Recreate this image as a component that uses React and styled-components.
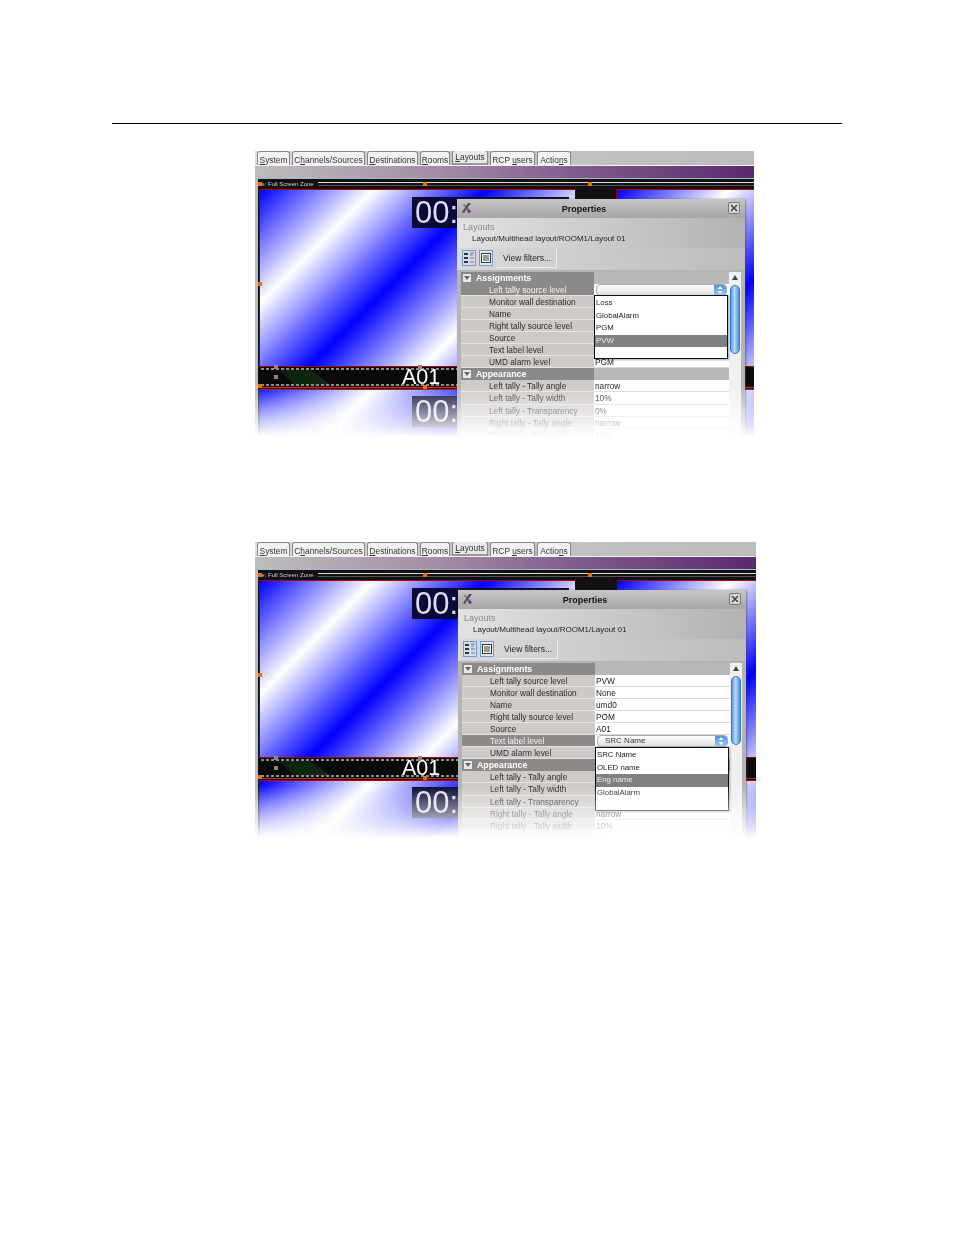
import React from "react"
import styled, { createGlobalStyle } from "styled-components"

const GlobalStyle = createGlobalStyle`
  html, body {
    margin: 0;
    padding: 0;
    background: #fff;
    font-family: "Liberation Sans", Arial, sans-serif;
  }
`

const Page = styled.div`
  width: 954px;
  height: 1235px;
  overflow: hidden;
  display: flex;
  flex-direction: column;
  align-items: flex-start;
`

const HeaderRule = styled.div`
  margin: 123px 0 0 112px;
  width: 730px;
  height: 1px;
  background: #000;
`

const Figure = styled.div`
  position: relative;
  display: flex;
  flex-direction: column;
  width: ${({ $width }) => $width}px;
  height: ${({ $height }) => $height}px;
  margin: ${({ $top }) => $top}px 0 0 255px;
  overflow: hidden;
  filter: blur(0.35px);
`

const Fade = styled.div`
  position: absolute;
  left: 0;
  right: 0;
  bottom: 0;
  height: 52px;
  background: linear-gradient(rgba(255, 255, 255, 0), #fff);
`

const TabBar = styled.div`
  display: flex;
  align-items: flex-end;
  gap: 2px;
  height: 14px;
  padding-left: 2px;
  background: linear-gradient(90deg, #dcdcdc, #c4c4c4 40%, #bcbcbc);
  flex: none;
`

const Tab = styled.div`
  height: ${({ $active }) => ($active ? 15 : 14)}px;
  width: ${({ $width }) => $width}px;
  box-sizing: border-box;
  border: 1px solid #888;
  border-bottom: ${({ $active }) => ($active ? "2px solid #999" : "none")};
  border-radius: 3px 3px 0 0;
  background: ${({ $active }) => ($active ? "#e8e8e8" : "#f2f2f2")};
  color: #333;
  font-size: 8.4px;
  line-height: ${({ $active }) => ($active ? 13 : 17)}px;
  text-align: center;
  white-space: nowrap;
`

const Band = styled.div`
  flex: none;
  height: 12px;
  border-top: 1px solid #f2f2f2;
  border-bottom: 1px solid #a9bac6;
  background: linear-gradient(90deg, #bdbdbd, #a58fa8 35%, #7f5a8c 65%, #5a2a6e);
`

const Canvas = styled.div`
  position: relative;
  flex: 1;
  display: flex;
  flex-direction: column;
  background: #111;
  border-left: 3px solid #b8bcc0;
  overflow: hidden;
`

const TopStrip = styled.div`
  flex: none;
  height: 10px;
  display: flex;
  align-items: center;
  gap: 4px;
  color: #ccc;
  font-size: 6px;
  white-space: nowrap;
`

const StripLine = styled.span`
  flex: 1;
  height: 2px;
  border-top: 1px solid #ddd;
  border-bottom: 1px solid #555;
`

const ZoneGrid = styled.div`
  display: grid;
  grid-template-columns: 316px ${({ $gap }) => $gap}px 1fr;
  grid-template-rows: 177px 22px 70px;
  padding-left: 1px;
`

const Zone = styled.div`
  position: relative;
  grid-column: ${({ $col }) => $col};
  box-sizing: border-box;
  border-top: 1px solid #b00000;
  border-left: 1px solid #900000;
  margin-top: ${({ $lower }) => ($lower ? 1 : 0)}px;
  background: repeating-linear-gradient(135deg, #0000ff 0, #ffffff 80px, #0000ff 160px);
`

const TallyBar = styled.div`
  position: relative;
  grid-column: ${({ $col }) => $col};
  box-sizing: border-box;
  background: #0a0a0a;
  border-top: 1px solid #a00000;
  border-bottom: 1px solid #d02020;
  color: #fff;
`

const DashLine = styled.div`
  position: absolute;
  left: 2px;
  right: 0;
  top: ${({ $y }) => $y}px;
  height: 2px;
  background: repeating-linear-gradient(90deg, #8c8c8c 0, #8c8c8c 3px, transparent 3px, transparent 5px);
`

const Wedge = styled.div`
  position: absolute;
  left: 20px;
  top: 3px;
  width: 52px;
  height: 15px;
  background: linear-gradient(90deg, #0a240c, #0e260e 60%, #202020);
  clip-path: polygon(0 0, 60% 0, 100% 100%, 30% 100%);
`

const BarLabel = styled.div`
  position: absolute;
  left: 143px;
  top: 0;
  font-size: 21.5px;
  line-height: 21px;
`

const Clock = styled.div`
  position: absolute;
  left: 152px;
  top: ${({ $y }) => $y}px;
  width: 157px;
  height: 31px;
  padding-left: 3px;
  box-sizing: border-box;
  background: #0a0a38;
  color: #dcdcf4;
  font-size: 31px;
  line-height: 31px;
  white-space: nowrap;
  overflow: hidden;
`

const Handle = styled.div`
  position: absolute;
  left: ${({ $x }) => $x}px;
  top: ${({ $y }) => $y}px;
  width: 4px;
  height: 4px;
  background: ${({ $gray }) => ($gray ? "#888" : "#f07000")};
`

const Dialog = styled.div`
  position: absolute;
  left: ${({ $left }) => $left}px;
  top: 20px;
  width: 288px;
  box-sizing: border-box;
  padding: 0 4px;
  background: #b4b4b4;
  box-shadow: 1px 0 2px rgba(60, 60, 60, 0.5);
  border-radius: 2px 2px 0 0;
`

const TitleBar = styled.div`
  position: relative;
  height: 19px;
  margin: 0 -4px;
  padding-right: 34px;
  display: flex;
  align-items: center;
  justify-content: center;
  background: linear-gradient(#c6c6c6, #a6a6a6);
  color: #111;
  font-size: 9px;
  font-weight: 700;
`

const TitleLogo = styled.svg`
  position: absolute;
  left: 4px;
  top: 3px;
`

const CloseBox = styled.div`
  position: absolute;
  right: 5px;
  top: 3px;
  width: 12px;
  height: 12px;
  box-sizing: border-box;
  border: 1px solid #777;
  border-radius: 2px;
  background: #d8d8d8;
  display: flex;
  align-items: center;
  justify-content: center;
`

const PathArea = styled.div`
  height: 30px;
  margin: 0 -4px;
  padding: 4px 0 0 6px;
  box-sizing: border-box;
  background: linear-gradient(90deg, #e2e2e2, #c6c6c6 60%, #b2b2b2);
`

const PathCaption = styled.div`
  color: #888;
  font-size: 9px;
  line-height: 11px;
`

const PathValue = styled.div`
  margin-left: 9px;
  color: #222;
  font-size: 8px;
  line-height: 12px;
`

const Toolbar = styled.div`
  height: 22px;
  margin: 0 -4px;
  padding: 0 0 2px 5px;
  box-sizing: border-box;
  display: flex;
  align-items: center;
  gap: 3px;
  background: linear-gradient(90deg, #dadada, #bcbcbc);
`

const ToolIcon = styled.div`
  width: 14px;
  height: 16px;
  box-sizing: border-box;
  border: 1px solid #6f9bd0;
  background: ${({ $on }) => ($on ? "#d4deea" : "#e4e8ee")};
  display: flex;
  align-items: center;
  justify-content: center;
`

const ToolButton = styled.div`
  margin-left: 1px;
  width: 60px;
  height: 19px;
  box-sizing: border-box;
  padding-left: 6px;
  color: #222;
  font-size: 8.5px;
  line-height: 18px;
  border-right: 1px solid #eee;
  border-bottom: 1px solid #eee;
`

const GridBody = styled.div`
  position: relative;
  display: flex;
  margin-top: 2px;
`

const Rows = styled.div`
  width: 268px;
  flex: none;
`

const Row = styled.div`
  display: grid;
  grid-template-columns: 133px 1fr;
  height: 12.05px;
  font-size: 8.3px;
  line-height: 12px;
  white-space: nowrap;
`

const Label = styled.div`
  padding-left: ${({ $section }) => ($section ? 15 : 28)}px;
  position: relative;
  box-sizing: border-box;
  background: ${({ $section, $selected }) =>
    $section || $selected ? "#8a8a8a" : "#cecac8"};
  color: ${({ $section, $selected }) =>
    $section ? "#fff" : $selected ? "#f4f4f4" : "#2c2c2c"};
  font-weight: ${({ $section }) => ($section ? 700 : 400)};
  font-size: ${({ $section }) => ($section ? 8.8 : 8.3)}px;
  box-shadow: inset 0 -1px 0 ${({ $section }) => ($section ? "#8a8a8a" : "#e6e4e2")};
`

const SectionBox = styled.span`
  position: absolute;
  left: 2px;
  top: 2px;
  width: 8px;
  height: 8px;
  background: #e8e8e8;
  &::after {
    content: "";
    position: absolute;
    left: 1px;
    top: 2px;
    border: 3px solid transparent;
    border-top: 4px solid #666;
  }
`

const Value = styled.div`
  padding-left: 1px;
  background: ${({ $section }) => ($section ? "#b8b8b8" : "#fff")};
  color: #222;
  box-shadow: inset 0 -1px 0 ${({ $section }) => ($section ? "#b8b8b8" : "#d8d8d8")};
`

const Combo = styled.div`
  position: relative;
  height: 10px;
  margin: 0 2px 0 1px;
  padding-left: 7px;
  font-size: 8px;
  line-height: 10px;
  color: #333;
  border: 1px solid #aaa;
  border-radius: 4px;
  background: linear-gradient(#fff, #e0e0e0);
  &::after {
    content: "";
    position: absolute;
    right: 0;
    top: 0;
    width: 12px;
    height: 10px;
    border-radius: 0 3px 3px 0;
    background: linear-gradient(#4a90e8, #9cc6f4);
  }
`

const ComboArrows = styled.svg`
  position: absolute;
  right: 3px;
  top: 1px;
  z-index: 1;
`

const DropList = styled.div`
  position: absolute;
  left: 133px;
  top: ${({ $y }) => $y}px;
  width: 134px;
  height: 64px;
  padding-top: 1px;
  box-sizing: border-box;
  background: #fff;
  border: 1px solid #111;
  box-shadow: 1px 1px 2px rgba(0, 0, 0, 0.35);
  font-size: 7.8px;
`

const DropItem = styled.div`
  height: 12.6px;
  line-height: 12.6px;
  padding-left: 1px;
  color: ${({ $selected }) => ($selected ? "#ececec" : "#222")};
  background: ${({ $selected }) => ($selected ? "#808080" : "transparent")};
`

const ScrollTrack = styled.div`
  position: relative;
  width: 12px;
  flex: none;
  background: #f0f0f0;
`

const ScrollArrow = styled.div`
  position: absolute;
  left: 3px;
  top: 3px;
  border: 3px solid transparent;
  border-bottom: 5px solid #444;
  border-top: none;
`

const ScrollThumb = styled.div`
  position: absolute;
  left: 1px;
  top: 13px;
  width: 10px;
  height: 69px;
  box-sizing: border-box;
  border: 1px solid #3a78c8;
  border-radius: 5px;
  background: linear-gradient(90deg, #5a9ce8, #b8d8f8 45%, #4a8cdc);
`

const assignmentRows = [
  "Left tally source level",
  "Monitor wall destination",
  "Name",
  "Right tally source level",
  "Source",
  "Text label level",
  "UMD alarm level",
]

const appearanceRows = [
  "Left tally - Tally angle",
  "Left tally - Tally width",
  "Left tally - Transparency",
  "Right tally - Tally angle",
  "Right tally - Tally width",
  "Right tally - Transparency",
]

const TAB_LIST = [
  { label: <><u>S</u>ystem</>, width: 33 },
  { label: <>C<u>h</u>annels/Sources</>, width: 73 },
  { label: <><u>D</u>estinations</>, width: 51 },
  { label: <><u>R</u>ooms</>, width: 30 },
  { label: <><u>L</u>ayouts</>, width: 36, active: true },
  { label: <>RCP <u>u</u>sers</>, width: 45 },
  { label: <>Actio<u>n</u>s</>, width: 34 },
]

const Logo = () => (
  <TitleLogo width="12" height="12" viewBox="0 0 12 12">
    <path d="M1 2 L4 2 L11 10 L8 10 Z" fill="#8a8a8a" />
    <path d="M10 1 L7 1 L1 10 L3 11 Z" fill="#555" />
    <path d="M6 6 L10 10 L7 11 Z" fill="#7a1a8a" />
  </TitleLogo>
)

const CloseIcon = () => (
  <svg width="8" height="8" viewBox="0 0 8 8">
    <path d="M1 1 L7 7 M7 1 L1 7" stroke="#444" strokeWidth="1.6" />
  </svg>
)

const TreeIcon = () => (
  <svg width="10" height="12" viewBox="0 0 10 12">
    <path d="M0 1h4v2H0zM0 5h4v2H0zM0 9h4v2H0z" fill="#333" />
    <path d="M6 1h4M6 3h3M6 6h4M6 10h4" stroke="#777" strokeWidth="1" />
  </svg>
)

const ListIcon = () => (
  <svg width="10" height="10" viewBox="0 0 10 10">
    <rect x="0.5" y="0.5" width="9" height="9" fill="#fff" stroke="#333" />
    <path d="M2 3h6M2 5h6M2 7h6" stroke="#333" strokeWidth="1" />
  </svg>
)

const Arrows = () => (
  <ComboArrows width="6" height="8" viewBox="0 0 6 8">
    <path d="M3 0 L5.5 3 L0.5 3 Z M3 8 L0.5 5 L5.5 5 Z" fill="#fff" />
  </ComboArrows>
)

const handles = [
  { x: 0, y: 3 },
  { x: 165, y: 3 },
  { x: 330, y: 3 },
  { x: 0, y: 103 },
  { x: 0, y: 205 },
  { x: 165, y: 206 },
  { x: 16, y: 186, gray: true },
  { x: 16, y: 196, gray: true },
  { x: 160, y: 186, gray: true },
]

const Screenshot = ({ width, height, top, gap, dialogLeft, values, comboRow, comboText, items, dropY, selected }) => {
  const rowValue = (name, index) => {
    if (index === comboRow) {
      return (
        <Combo>
          {comboText}
          <Arrows />
        </Combo>
      )
    }
    return values[name] || ""
  }

  return (
    <Figure $width={width} $height={height} $top={top}>
      <TabBar>
        {TAB_LIST.map((tab, i) => (
          <Tab key={i} $width={tab.width} $active={tab.active}>
            {tab.label}
          </Tab>
        ))}
      </TabBar>
      <Band />
      <Canvas>
        <TopStrip>
          ne: Full Screen Zone
          <StripLine />
        </TopStrip>
        <ZoneGrid $gap={gap}>
          <Zone $col={1}>
            <Clock $y={7}>00:00:00</Clock>
          </Zone>
          <Zone $col={3} />
          <TallyBar $col={1}>
            <Wedge />
            <DashLine $y={1} />
            <DashLine $y={17} />
            <BarLabel>A01</BarLabel>
          </TallyBar>
          <TallyBar $col={3} />
          <Zone $col={1} $lower>
            <Clock $y={6}>00:00:00</Clock>
          </Zone>
          <Zone $col={3} $lower />
        </ZoneGrid>
        {handles.map((h, i) => (
          <Handle key={i} $x={h.x} $y={h.y} $gray={h.gray} />
        ))}

        <Dialog $left={dialogLeft}>
          <TitleBar>
            <Logo />
            Properties
            <CloseBox>
              <CloseIcon />
            </CloseBox>
          </TitleBar>
          <PathArea>
            <PathCaption>Layouts</PathCaption>
            <PathValue>Layout/Multihead layout/ROOM1/Layout 01</PathValue>
          </PathArea>
          <Toolbar>
            <ToolIcon $on>
              <TreeIcon />
            </ToolIcon>
            <ToolIcon>
              <ListIcon />
            </ToolIcon>
            <ToolButton>View filters...</ToolButton>
          </Toolbar>
          <GridBody>
            <Rows>
              <Row>
                <Label $section>
                  <SectionBox />
                  Assignments
                </Label>
                <Value $section />
              </Row>
              {assignmentRows.map((name, i) => (
                <Row key={name}>
                  <Label $selected={i === comboRow}>{name}</Label>
                  <Value>{rowValue(name, i)}</Value>
                </Row>
              ))}
              <Row>
                <Label $section>
                  <SectionBox />
                  Appearance
                </Label>
                <Value $section />
              </Row>
              {appearanceRows.map((name) => (
                <Row key={name}>
                  <Label>{name}</Label>
                  <Value>{values[name]}</Value>
                </Row>
              ))}
            </Rows>
            <ScrollTrack>
              <ScrollArrow />
              <ScrollThumb />
            </ScrollTrack>
            <DropList $y={dropY}>
              {items.map((item, i) => (
                <DropItem key={i} $selected={item === selected}>
                  {item}
                </DropItem>
              ))}
            </DropList>
          </GridBody>
        </Dialog>
      </Canvas>
      <Fade />
    </Figure>
  )
}

const appearanceValues = {
  "Left tally - Tally angle": "narrow",
  "Left tally - Tally width": "10%",
  "Left tally - Transparency": "0%",
  "Right tally - Tally angle": "narrow",
  "Right tally - Tally width": "10%",
  "Right tally - Transparency": "0%",
}

const App = () => (
  <Page>
    <GlobalStyle />
    <HeaderRule />
    <Screenshot
      width={499}
      height={286}
      top={27}
      gap={41}
      dialogLeft={199}
      comboRow={0}
      comboText=""
      dropY={23}
      items={["Loss", "GlobalAlarm", "PGM", "PVW", ""]}
      selected="PVW"
      values={{ "UMD alarm level": "PGM", ...appearanceValues }}
    />
    <Screenshot
      width={501}
      height={296}
      top={105}
      gap={42}
      dialogLeft={200}
      comboRow={5}
      comboText="SRC Name"
      dropY={84}
      items={["SRC Name", "OLED name", "Eng name", "GlobalAlarm", ""]}
      selected="Eng name"
      values={{
        "Left tally source level": "PVW",
        "Monitor wall destination": "None",
        Name: "umd0",
        "Right tally source level": "POM",
        Source: "A01",
        ...appearanceValues,
      }}
    />
  </Page>
)

export default App
